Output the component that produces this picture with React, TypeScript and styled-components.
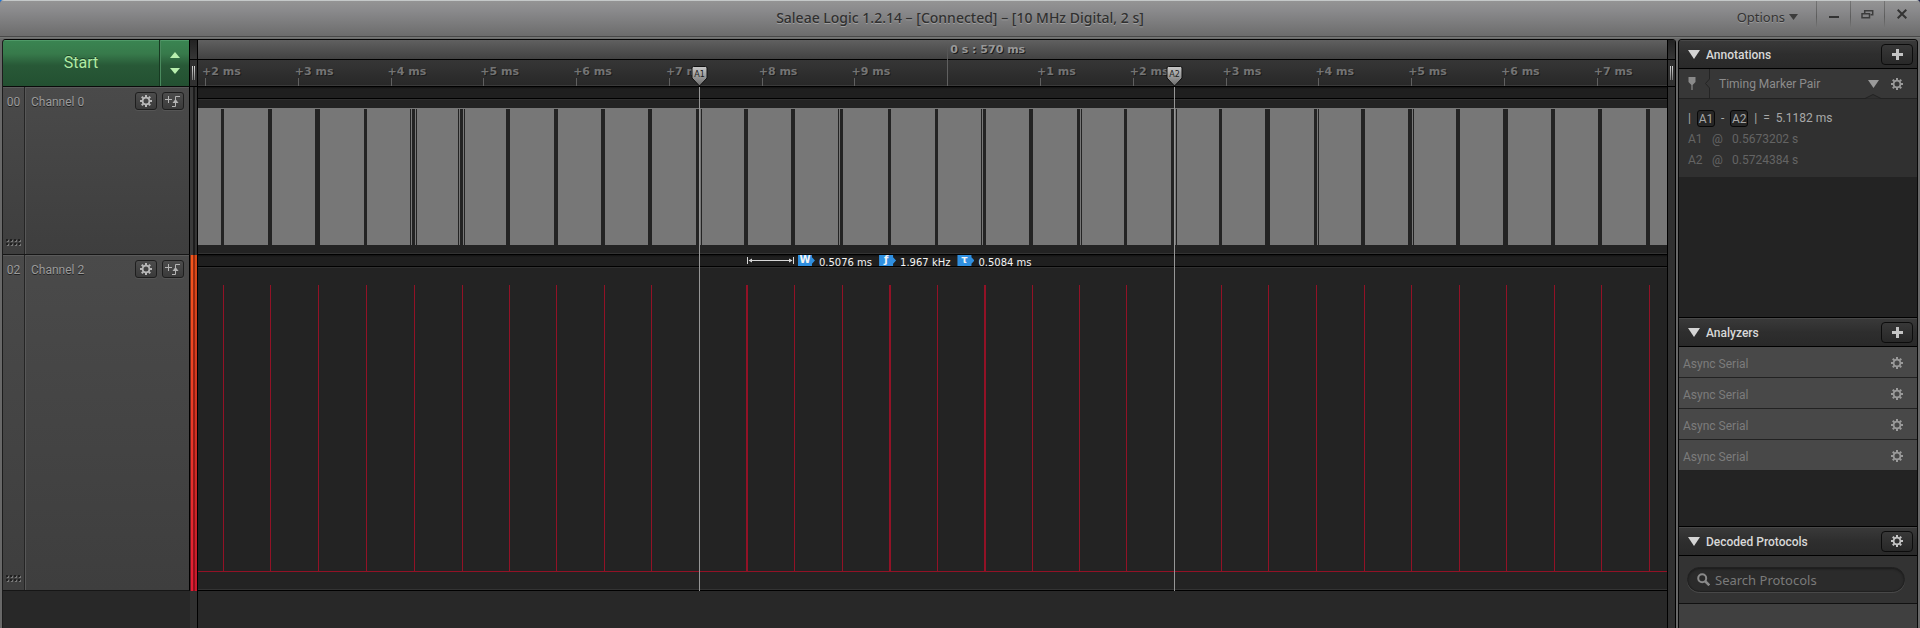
import React from "react";
import styled, { createGlobalStyle, css } from "styled-components";

const GlobalStyle = createGlobalStyle`
  *, *::before, *::after { box-sizing: border-box; }
  html, body { margin: 0; padding: 0; }
  body {
    background: linear-gradient(90deg, #1573e0, #1c2350);
    font-family: Roboto, "Liberation Sans", sans-serif;
    font-size: 12px;
    line-height: 16px;
    color: #9c9c9c;
  }
  button, input { font: inherit; color: inherit; margin: 0; }
  button { padding: 0; border: 0; background: none; cursor: pointer; }
  h1, h2, p { margin: 0; font: inherit; }
  ul { margin: 0; padding: 0; list-style: none; }
  svg { display: block; flex: none; }
`;

const Window = styled.div`
  display: flex;
  flex-direction: column;
  min-height: 100vh;
  background: #686868;
  border-radius: 4px 4px 0 0;
  overflow: hidden;
`;

const TitleBar = styled.header`
  display: grid;
  grid-template-columns: 1fr auto 1fr;
  height: 39px;
  border-top: 1px solid #c4c8c8;
  background: linear-gradient(#949494, #8a8a8c 25%, #6c6c6c 35px, #484848 35px, #484848 36px, #7a7c7a 36px, #666 38px);
  font-family: "Noto Sans", "Open Sans", sans-serif;
  font-size: 13px;
`;

const Title = styled.h1`
  grid-column: 2;
  align-self: start;
  margin-top: 9px;
  font-size: 14px;
  font-weight: 500;
  line-height: 16px;
  color: #303030;
  text-shadow: 0 1px 0 #a0a0a0;
`;

const WindowControls = styled.div`
  display: flex;
  justify-content: flex-end;
  height: 26px;
  padding-right: 2px;
`;

const OptionsButton = styled.button`
  display: flex;
  align-items: center;
  gap: 4px;
  height: 32px;
  margin-right: 18px;
  color: #333;
  text-shadow: 0 1px 0 #999;
`;

const WindowButton = styled.button`
  display: flex;
  align-items: center;
  justify-content: center;
  width: 34px;
  height: 26px;
  border-left: 1px solid;
  border-image: linear-gradient(#777, #5c5c5c 60%, #777) 1;
`;

const Workspace = styled.main`
  display: flex;
  flex: 1;
  align-items: stretch;
  padding: 0 2px;
  gap: 2px;
`;

const Capture = styled.div`
  display: flex;
  flex: 1;
  min-width: 0;
  background: #282828;
  border-top: 1px solid #050505;
  border-left: 1px solid #1c1c1c;
  border-radius: 4px 4px 0 0;
  overflow: hidden;
`;

const ChannelColumn = styled.div`
  width: 187px;
  flex: none;
`;

const StartBar = styled.div`
  display: flex;
  height: 47px;
  border-right: 1px solid #000;
  border-bottom: 1px solid #0a0a0a;
  background: linear-gradient(#3a8552, #377a4b 30%, #285937 55%, #235031);
  box-shadow: inset 0 1px 0 #4f9a68;
`;

const StartButton = styled.button`
  flex: 1;
  font-size: 16px;
  color: #b0eaa4;
  border-right: 1px solid #173a22;
  text-shadow: 0 -1px 0 #1d4529;
`;

const StartOptions = styled.button`
  display: flex;
  flex-direction: column;
  align-items: center;
  justify-content: center;
  gap: 10px;
  width: 29px;
  border-left: 1px solid #4a8a5e;
`;

const ChannelRow = styled.section<{ $rows: number }>`
  display: flex;
  height: calc(${(p) => p.$rows} * 168px);
  background: linear-gradient(#4a4a4a, #3e3e3e);
  border-right: 1px solid #000;
  border-bottom: 1px solid #161616;
  box-shadow: inset 0 1px 0 #5a5a5a;
  text-shadow: 0 1px 0 #222;
`;

const ChannelIndex = styled.div`
  display: flex;
  flex-direction: column;
  align-items: center;
  justify-content: space-between;
  width: 22px;
  padding: 7px 0 7px;
  border-right: 1px solid #252525;
`;

const ChannelName = styled.div`
  display: flex;
  flex: 1;
  align-items: flex-start;
  gap: 5px;
  padding: 5px 5px 0 5px;
  border-left: 1px solid #575757;

  h2 {
    flex: 1;
    padding-top: 2px;
  }
`;

const SmallButton = styled.button`
  display: flex;
  align-items: center;
  justify-content: center;
  width: 22px;
  height: 18px;
  border: 1px solid #1e1e1e;
  border-radius: 3px;
  background: linear-gradient(#4c4c4c, #3a3a3a);
  box-shadow: 0 1px 0 #555;
`;

const Rail = styled.div<{ $side: "left" | "right" }>`
  display: flex;
  flex-direction: column;
  width: ${(p) => (p.$side === "left" ? 8 : 9)}px;
  flex: none;
  background: #303030;
  border-right: 1px solid #000;
  ${(p) => p.$side === "right" && css`border-left: 1px solid #000;`}
`;

const RailHead = styled.div`
  height: 20px;
  border-bottom: 1px solid #000;
  background: linear-gradient(#222, #363636);
`;

const RailHandle = styled.div`
  display: flex;
  justify-content: center;
  gap: 1px;
  height: 27px;
  padding-top: 6px;
  border-bottom: 1px solid #000;

  &::before,
  &::after {
    content: "";
    width: 1px;
    height: 14px;
    background: linear-gradient(#d8d8d8, #777);
  }
`;

const RailStrip = styled.div<{ $rows: number; $active?: boolean }>`
  height: calc(${(p) => p.$rows} * 168px);
  background: ${(p) =>
    p.$active
      ? "linear-gradient(90deg, #1a1a1a99 0 1px, transparent 1px 3px, #30000077 3px 5px, #20000020 5px), linear-gradient(#f4561c, #e21c34)"
      : "linear-gradient(90deg, #3a3a3a 0 3px, #1c1c1c 3px 5px, #343434 5px)"};
`;

const Plot = styled.div`
  position: relative;
  flex: 1;
  min-width: 0;
`;

const Ruler = styled.div`
  display: flex;
  height: 47px;
  padding-left: 4px;
  overflow: hidden;
  border-bottom: 1px solid #000;
  background: linear-gradient(#606060, #424242 19px, #000 19px, #000 20px, #363636 20px, #282828 45px, #3a3a3a 45px);
  font-family: "DejaVu Sans", sans-serif;
  font-size: 11px;
  font-weight: bold;
  color: #747474;
  text-shadow: 1px 1px 0 #1c1c1c;
`;

const Tick = styled.div<{ $major?: boolean }>`
  display: flex;
  flex-direction: column;
  flex: 0 0 6.334%;
  justify-content: space-between;
  padding-top: ${(p) => (p.$major ? 2 : 26)}px;
  white-space: nowrap;

  ${(p) =>
    p.$major
      ? css`
          color: #989898;
          padding-left: 6px;
          background: linear-gradient(transparent 6px, #606060 20px) 3px 0 / 1px 100% no-repeat;
        `
      : css`
          line-height: 12px;

          &::after {
            content: "";
            width: 1px;
            height: 8px;
            margin-left: 3px;
            background: #606060;
          }
        `}
`;

const Track = styled.section<{ $rows: number }>`
  display: flex;
  flex-direction: column;
  height: calc(${(p) => p.$rows} * 168px);
  background: #232323;
  border-bottom: 1px solid #000;
  box-shadow: inset 0 -1px 0 #333;

  > svg {
    width: 100%;
    flex: 1;
    min-height: 0;
  }
`;

const TrackHead = styled.div`
  display: flex;
  flex: none;
  align-items: center;
  height: 12px;
  padding-left: 37.37%;
  border-bottom: 1px solid #000;
  background: linear-gradient(#111, #1f1f1f 2px);
  box-shadow: 0 1px 0 #303030;
  font-family: "DejaVu Sans", sans-serif;
  font-size: 10px;
  line-height: 12px;
  color: #f4f4f4;
  white-space: nowrap;
`;

const Reading = styled.span`
  display: flex;
  align-items: flex-start;
  height: 11px;
  gap: 4px;
  margin: 0 3px 0 4px;
  line-height: 16px;
`;

const Badge = styled.b`
  display: flex;
  justify-content: center;
  width: 17px;
  height: 11px;
  padding-right: 3px;
  background: #2f8fe0;
  clip-path: polygon(0 0, 14px 0, 14px 20%, 100% 50%, 14px 80%, 14px 100%, 0 100%);
  line-height: 10px;
`;

const Marker = styled.div<{ $at: number }>`
  position: absolute;
  top: 25px;
  bottom: 37px;
  left: ${(p) => p.$at}%;
  width: 19px;
  margin-left: -10px;
  display: flex;
  flex-direction: column;
  align-items: center;

  &::after {
    content: "";
    flex: 1;
    width: 1px;
    background: #969696;
  }
`;

const Sidebar = styled.aside`
  width: 240px;
  flex: none;
  border: 1px solid #080808;
  border-bottom: 0;
  border-radius: 4px 4px 0 0;
  background: #232323;
  overflow: hidden;
`;

const PanelHead = styled.div`
  display: flex;
  align-items: center;
  gap: 6px;
  height: 29px;
  padding: 0 4px 0 9px;
  border-bottom: 1px solid #000;
  background: linear-gradient(#3a3a3a, #2e2e2e 50%, #292929);
  box-shadow: inset 0 1px 0 #484848;
  font-size: 12px;
  font-weight: 500;
  color: #d8d8d8;

  h2 {
    flex: 1;
    padding-top: 2px;
  }
`;

const PanelButton = styled.button`
  display: flex;
  align-items: center;
  justify-content: center;
  width: 32px;
  height: 21px;
  border: 1px solid #0c0c0c;
  border-radius: 4px;
  background: linear-gradient(#383838, #282828);
`;

const AnnotationRow = styled.div`
  display: flex;
  align-items: center;
  height: 30px;
  padding: 0 14px 0 9px;
  background: #373737;
  color: #8c8c8c;
  border-bottom: 1px solid #222;

  p {
    flex: 1;
    padding-left: 8px;
  }
`;

const IconButton = styled.button`
  display: flex;
  margin-left: 12px;
`;

const AnnotationBody = styled.div`
  position: relative;
  height: 78px;
  padding: 9px 9px 0;
  background: #303030;
  color: #646464;
  line-height: 21px;
`;

const Notch = styled.svg`
  position: absolute;
  top: -5px;
  right: 36px;
`;

const Delta = styled.p`
  display: flex;
  align-items: center;
  gap: 6px;
  color: #a8a8a8;
`;

const MarkerChip = styled.span`
  width: 18px;
  height: 17px;
  border: 1px solid #080808;
  border-radius: 3px;
  background: #262626;
  line-height: 16px;
  text-align: center;
`;

const MarkerTime = styled.p`
  display: grid;
  grid-template-columns: 24px 20px 1fr;
`;

const PanelSection = styled.section<{ $space: number; $first?: boolean }>`
  padding-bottom: ${(p) => p.$space}px;
  ${(p) => !p.$first && css`border-top: 1px solid #000;`}
`;

const AnalyzerRow = styled.li`
  display: flex;
  align-items: center;
  justify-content: space-between;
  height: 31px;
  padding: 2px 14px 0 4px;
  background: #484848;
  color: #7c7c7c;
  border-bottom: 1px solid #222;

  span {
    padding-top: 2px;
  }
`;

const SearchArea = styled.div`
  height: 48px;
  padding: 11px 12px 0 8px;
  background: #333;
  border-bottom: 1px solid #111;
`;

const SearchBox = styled.label`
  display: flex;
  align-items: center;
  gap: 5px;
  height: 25px;
  padding: 0 10px 0 9px;
  border: 1px solid #202020;
  border-radius: 13px;
  background: #2b2b2b;
  box-shadow: inset 0 1px 2px #1a1a1a, 0 1px 0 #484848;
  font-family: "Noto Sans", "Open Sans", sans-serif;
  font-size: 13px;

  input {
    flex: 1;
    min-width: 0;
    padding: 0;
    border: 0;
    outline: 0;
    background: none;
  }
  input::placeholder {
    color: #7a7a7a;
    opacity: 1;
  }
`;

const ProtocolList = styled.div`
  height: 100%;
  background: #404040;
`;

const Gear = ({ size = 12, color = "#999" }: { size?: number; color?: string }) => (
  <svg width={size} height={size} viewBox="0 0 12 12" fill="none" stroke={color} aria-hidden="true">
    <circle cx="6" cy="6" r="3.4" strokeWidth="1.8" />
    {[0, 45, 90, 135, 180, 225, 270, 315].map((a) => (
      <path key={a} d="M6 0v2.2" strokeWidth="2" transform={`rotate(${a} 6 6)`} />
    ))}
  </svg>
);

const Triangle = ({ w, h, color, up }: { w: number; h: number; color: string; up?: boolean }) => (
  <svg width={w} height={h} viewBox="0 0 10 10" preserveAspectRatio="none" aria-hidden="true">
    <path d={up ? "M0 10L5 0l5 10z" : "M0 0h10L5 10z"} fill={color} />
  </svg>
);

const Plus = () => (
  <svg width="11" height="11" viewBox="0 0 11 11" aria-hidden="true">
    <path d="M4 0h3v4h4v3H7v4H4V7H0V4h4z" fill="#c4c4c4" />
  </svg>
);

const TriggerIcon = () => (
  <svg width="16" height="12" viewBox="0 0 16 12" fill="none" stroke="#b4b4b4" aria-hidden="true">
    <path d="M3.500 1v7M0 4.500h7M7 11.500h3.500V1.500H15" />
    <path d="M7.500 8L10.500 4l3 4z" fill="#b4b4b4" stroke="none" />
  </svg>
);

const Grip = () => (
  <svg width="16" height="8" viewBox="0 0 16 8" aria-hidden="true">
    {[0, 4, 8, 12].map((x) =>
      [0, 4].map((y) => (
        <g key={`${x}-${y}`}>
          <rect x={x + 1} y={y + 1} width="2" height="2" fill="#787878" />
          <rect x={x} y={y} width="2" height="2" fill="#202020" />
        </g>
      )),
    )}
  </svg>
);

const PinIcon = () => (
  <svg width="8" height="13" viewBox="0 0 8 13" aria-hidden="true">
    <path d="M.5 0h7v5L4.600 8v5H3.400V8L.5 5z" fill="#8a8a8a" />
  </svg>
);

const SPAN = 1469;

/* Idle intervals of the busy line: start and width, in plot units. */
const GAPS: [number, number][] = [
  [23, 3], [70, 4], [117, 5], [166, 3], [212, 1], [214, 3], [218, 1], [260, 1], [262, 3], [266, 1],
  [308, 4], [356, 4], [403, 4], [450, 4], [498, 3], [503, 1], [546, 4], [593, 4], [640, 1], [642, 3],
  [690, 3], [737, 3], [783, 1], [785, 3], [831, 4], [879, 3], [883, 1], [926, 3], [973, 3], [978, 1],
  [1021, 3], [1067, 5], [1116, 3], [1120, 1], [1163, 4], [1210, 4], [1215, 1], [1258, 4], [1305, 5],
  [1353, 4], [1400, 4], [1448, 4],
];

const PULSES: [number, number][] = [
  [25, 1], [72, 1], [120, 1], [168, 1], [216, 1], [264, 1], [311, 1], [358, 1], [406, 1], [453, 1],
  [501, 1], [548, 2], [596, 1], [644, 1], [691, 2], [739, 1], [786, 2], [834, 1], [881, 1], [928, 1],
  [976, 1], [1023, 1], [1070, 1], [1118, 1], [1166, 1], [1213, 1], [1261, 1], [1308, 1], [1356, 1],
  [1403, 1], [1451, 1],
];

const BusyWave = () => (
  <svg viewBox={`0 0 ${SPAN} 155`} preserveAspectRatio="none" shapeRendering="crispEdges">
    <rect x="0" y="9" width={SPAN} height="137" fill="#777" />
    {GAPS.map(([x, w]) => (
      <rect key={x} x={x} y="10" width={w} height="136" fill="#232323" />
    ))}
  </svg>
);

const PulseWave = () => (
  <svg viewBox={`0 0 ${SPAN} 323`} preserveAspectRatio="none" shapeRendering="crispEdges" fill="#921226">
    {PULSES.map(([x, w]) => (
      <rect key={x} x={x} y="18" width={w} height="286" />
    ))}
    <rect x="0" y="304" width={SPAN} height="1" />
  </svg>
);

const TICKS = ["+2 ms", "+3 ms", "+4 ms", "+5 ms", "+6 ms", "+7 ms", "+8 ms", "+9 ms", "0 s : 570 ms", "+1 ms", "+2 ms", "+3 ms", "+4 ms", "+5 ms", "+6 ms", "+7 ms"];

const Channel = ({ index, name, rows }: { index: string; name: string; rows: number }) => (
  <ChannelRow $rows={rows}>
    <ChannelIndex>
      <span>{index}</span>
      <Grip />
    </ChannelIndex>
    <ChannelName>
      <h2>{name}</h2>
      <SmallButton aria-label={`${name} settings`}>
        <Gear color="#b8b8b8" />
      </SmallButton>
      <SmallButton aria-label={`${name} trigger`}>
        <TriggerIcon />
      </SmallButton>
    </ChannelName>
  </ChannelRow>
);

const TimeMarker = ({ at, label }: { at: number; label: string }) => (
  <Marker $at={at}>
    <svg width="19" height="22" viewBox="0 0 19 22">
      <defs>
        <linearGradient id={`fill-${label}`} x1="0" y1="0" x2="0" y2="1">
          <stop offset="0" stopColor="#c8c8c8" />
          <stop offset="1" stopColor="#6c6c6c" />
        </linearGradient>
      </defs>
      <path d="M3.500 1.500h12q1.500 0 1.500 1.500v10L9.500 21 2 13V3q0-1.500 1.500-1.500z" fill={`url(#fill-${label})`} stroke="#111" />
      <text x="9.500" y="12" textAnchor="middle" fontFamily="DejaVu Sans" fontSize="8" fill="#1c1c1c">
        {label}
      </text>
    </svg>
  </Marker>
);

const Panel = ({ title, action, icon, space, first, children }: {
  title: string;
  action: string;
  icon: React.ReactNode;
  space: number;
  first?: boolean;
  children: React.ReactNode;
}) => (
  <PanelSection $space={space} $first={first}>
    <PanelHead>
      <Triangle w={12} h={9} color="#d4d4d4" />
      <h2>{title}</h2>
      <PanelButton aria-label={action}>{icon}</PanelButton>
    </PanelHead>
    {children}
  </PanelSection>
);

export default function App() {
  return (
    <>
      <GlobalStyle />
      <Window>
        <TitleBar>
          <Title>Saleae Logic 1.2.14 – [Connected] – [10 MHz Digital, 2 s]</Title>
          <WindowControls>
            <OptionsButton>
              Options
              <Triangle w={9} h={6} color="#3c3c3c" />
            </OptionsButton>
            <WindowButton aria-label="Minimize">
              <svg width="12" height="12" viewBox="0 0 12 12">
                <path d="M1 8h10v2H1z" fill="#333" />
              </svg>
            </WindowButton>
            <WindowButton aria-label="Restore">
              <svg width="13" height="11" viewBox="0 0 13 11" fill="none" stroke="#3c3c3c" strokeWidth="1.5">
                <path d="M3.700 4V1.700h8v4H9.500" />
                <path d="M1 4.700h7.500v4H1z" />
              </svg>
            </WindowButton>
            <WindowButton aria-label="Close">
              <svg width="10" height="10" viewBox="0 0 10 10" stroke="#333" strokeWidth="2">
                <path d="M.7.700l8.600 8.600M9.300.700L.7 9.300" />
              </svg>
            </WindowButton>
          </WindowControls>
        </TitleBar>

        <Workspace>
          <Capture>
            <ChannelColumn>
              <StartBar>
                <StartButton>Start</StartButton>
                <StartOptions aria-label="Capture duration">
                  <Triangle w={10} h={6} color="#b8efae" up />
                  <Triangle w={10} h={6} color="#b8efae" />
                </StartOptions>
              </StartBar>
              <Channel index="00" name="Channel 0" rows={1} />
              <Channel index="02" name="Channel 2" rows={2} />
            </ChannelColumn>

            <Rail $side="left">
              <RailHead />
              <RailHandle />
              <RailStrip $rows={1} />
              <RailStrip $rows={2} $active />
            </Rail>

            <Plot>
              <Ruler>
                {TICKS.map((label, i) => (
                  <Tick key={i} $major={i === 8}>
                    {label}
                  </Tick>
                ))}
              </Ruler>
              <Track $rows={1}>
                <TrackHead />
                <BusyWave />
              </Track>
              <Track $rows={2}>
                <TrackHead>
                  <svg width="47" height="7" viewBox="0 0 47 7" stroke="#d8d8d8" fill="#d8d8d8">
                    <path d="M.5 0v7M46.500 0v7M2 3.500h43" />
                    <path d="M1.500 3.500L5 1.500v4zM45.500 3.500L42 1.500v4z" stroke="none" />
                  </svg>
                  <Reading><Badge>W</Badge>0.5076 ms</Reading>
                  <Reading><Badge>ƒ</Badge>1.967 kHz</Reading>
                  <Reading><Badge>τ</Badge>0.5084 ms</Reading>
                </TrackHead>
                <PulseWave />
              </Track>
              <TimeMarker at={34.14} label="A1" />
              <TimeMarker at={66.5} label="A2" />
            </Plot>

            <Rail $side="right">
              <RailHead />
              <RailHandle />
            </Rail>
          </Capture>

          <Sidebar>
            <Panel title="Annotations" action="Add annotation" icon={<Plus />} space={140} first>
              <AnnotationRow>
                <PinIcon />
                <svg width="15" height="29" viewBox="0 0 15 29" fill="none" stroke="#242424">
                  <path d="M13.500 0v10l-4 4.500 4 4.500v10" />
                </svg>
                <p>Timing Marker Pair</p>
                <Triangle w={11} h={8} color="#9a9a9a" />
                <IconButton aria-label="Timing marker settings">
                  <Gear color="#9a9a9a" />
                </IconButton>
              </AnnotationRow>
              <AnnotationBody>
                <Notch width="16" height="6" viewBox="0 0 16 6" fill="#303030" stroke="#222">
                  <path d="M0 4.500L8 .5l8 4" />
                </Notch>
                <Delta>
                  <span>|</span>
                  <MarkerChip>A1</MarkerChip>
                  <span>-</span>
                  <MarkerChip>A2</MarkerChip>
                  <span>|</span>
                  <span>=</span>
                  <span>5.1182 ms</span>
                </Delta>
                <MarkerTime><span>A1</span><span>@</span><span>0.5673202 s</span></MarkerTime>
                <MarkerTime><span>A2</span><span>@</span><span>0.5724384 s</span></MarkerTime>
              </AnnotationBody>
            </Panel>

            <Panel title="Analyzers" action="Add analyzer" icon={<Plus />} space={55}>
              <ul>
                {[1, 2, 3, 4].map((n) => (
                  <AnalyzerRow key={n}>
                    <span>Async Serial</span>
                    <IconButton aria-label={`Async Serial ${n} settings`}>
                      <Gear color="#9a9a9a" />
                    </IconButton>
                  </AnalyzerRow>
                ))}
              </ul>
            </Panel>

            <Panel title="Decoded Protocols" action="Protocol settings" icon={<Gear color="#c4c4c4" />} space={0}>
              <SearchArea>
                <SearchBox>
                  <svg width="13" height="13" viewBox="0 0 13 13" fill="none" stroke="#8a8a8a" strokeWidth="2">
                    <circle cx="5.200" cy="5.200" r="4" />
                    <path d="M8 8l4.300 4.300" strokeWidth="2.500" />
                  </svg>
                  <input type="text" aria-label="Search Protocols" placeholder="Search Protocols" />
                </SearchBox>
              </SearchArea>
            </Panel>
            <ProtocolList />
          </Sidebar>
        </Workspace>
      </Window>
    </>
  );
}
